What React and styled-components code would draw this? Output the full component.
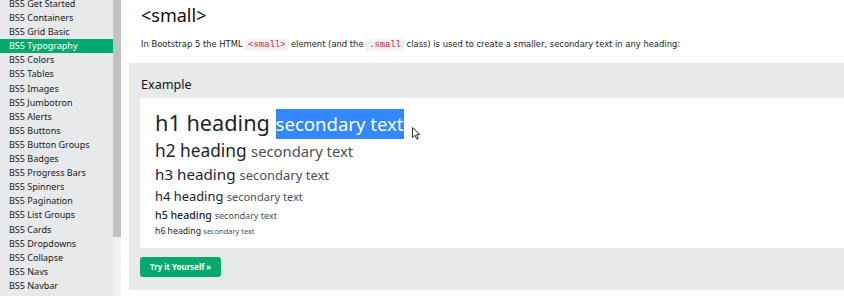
import styled, { createGlobalStyle } from 'styled-components'

const GlobalStyle = createGlobalStyle`
  html, body {
    margin: 0;
    padding: 0;
    background: #ffffff;
    overflow: hidden;
  }
`

const navItems = [
  'BS5 Get Started',
  'BS5 Containers',
  'BS5 Grid Basic',
  'BS5 Typography',
  'BS5 Colors',
  'BS5 Tables',
  'BS5 Images',
  'BS5 Jumbotron',
  'BS5 Alerts',
  'BS5 Buttons',
  'BS5 Button Groups',
  'BS5 Badges',
  'BS5 Progress Bars',
  'BS5 Spinners',
  'BS5 Pagination',
  'BS5 List Groups',
  'BS5 Cards',
  'BS5 Dropdowns',
  'BS5 Collapse',
  'BS5 Navs',
  'BS5 Navbar',
]

// font size and row height of each heading line
const headings = [
  { level: 1, size: 21.7, row: 31 },
  { level: 2, size: 17.3, row: 25 },
  { level: 3, size: 15.2, row: 23 },
  { level: 4, size: 12.9, row: 21 },
  { level: 5, size: 10.6, row: 17 },
  { level: 6, size: 8.7, row: 15 },
]

const Page = styled.div`
  display: flex;
  width: 844px;
  height: 296px;
  overflow: hidden;
  background: #ffffff;
`

const Sidebar = styled.nav`
  display: flex;
  width: 121px;
  flex-shrink: 0;
  background: #e7e9eb;
`

const NavList = styled.div`
  display: flex;
  flex: 1;
  flex-direction: column;
  margin-top: -3px;
`

const NavItem = styled.div`
  height: 14.1px;
  line-height: 14.1px;
  padding-left: 9px;
  font-family: 'Noto Sans', 'Open Sans', sans-serif;
  font-size: 9px;
  white-space: nowrap;
  color: ${(p) => (p.$active ? '#ffffff' : '#1a1a1a')};
  background: ${(p) => (p.$active ? '#04aa6d' : 'transparent')};
`

const Scrollbar = styled.div`
  display: flex;
  flex-direction: column;
  width: 8px;
  background: #f1f0f3;
`

const Thumb = styled.div`
  height: 237px;
  background: #c1c1c3;
`

const Main = styled.main`
  flex: 1;
  padding: 0 0 0 8px;
  display: flex;
  flex-direction: column;
`

const PageTitle = styled.h1`
  margin: 2px 0 0 12px;
  font-family: 'Noto Sans', 'Open Sans', sans-serif;
  font-size: 18px;
  font-weight: 400;
  line-height: 26px;
  color: #111111;
`

const Intro = styled.p`
  margin: 9px 0 0 12px;
  font-family: 'DejaVu Sans', Verdana, sans-serif;
  font-size: 8.4px;
  line-height: 14px;
  color: #222222;
  white-space: nowrap;
`

const Code = styled.code`
  font-family: 'Liberation Mono', monospace;
  font-size: 8.8px;
  color: #dc143c;
  background: #f1f1f1;
  padding: 1px 3px;
`

const ExampleBox = styled.section`
  margin-top: 11px;
  background: #e7e9eb;
  padding: 0 0 13px 11px;
  display: flex;
  flex-direction: column;
  align-items: flex-start;
  width: 760px;
`

const ExampleLabel = styled.h2`
  margin: 9px 0 0 1px;
  font-family: 'Noto Sans', 'Open Sans', sans-serif;
  font-size: 12.6px;
  font-weight: 400;
  line-height: 26px;
  color: #111111;
`

const ExampleCard = styled.div`
  width: 686px;
  background: #ffffff;
  padding: 8.5px 15px 9.5px;
  display: flex;
  flex-direction: column;
`

const Heading = styled.div`
  font-family: 'Noto Sans', 'Open Sans', sans-serif;
  font-size: ${(p) => p.$size}px;
  height: ${(p) => p.$row}px;
  line-height: ${(p) => p.$row}px;
  font-weight: ${(p) => (p.$level === 5 ? 500 : 400)};
  color: #212529;
  white-space: nowrap;
`

const Small = styled.small`
  font-size: 0.855em;
  font-weight: 400;
  color: ${(p) => (p.$selected ? '#ffffff' : '#495057')};
  background: ${(p) => (p.$selected ? '#3388ff' : 'transparent')};
  padding: ${(p) => (p.$selected ? '2px 0 3px' : '0')};
`

const TryButton = styled.button`
  margin-top: 9px;
  height: 20px;
  padding: 0 10px;
  border: none;
  border-radius: 3px;
  background: #04aa6d;
  color: #ffffff;
  font-family: 'Noto Sans', 'Open Sans', sans-serif;
  font-size: 7.9px;
  font-weight: 700;
  cursor: pointer;
`

const Cursor = styled.svg`
  position: absolute;
  left: 412px;
  top: 127px;
`

function App() {
  return (
    <>
      <GlobalStyle />
      <Page>
        <Sidebar>
          <NavList>
            {navItems.map((item) => (
              <NavItem key={item} $active={item === 'BS5 Typography'}>
                {item}
              </NavItem>
            ))}
          </NavList>
          <Scrollbar>
            <Thumb />
          </Scrollbar>
        </Sidebar>

        <Main>
          <PageTitle>&lt;small&gt;</PageTitle>
          <Intro>
            In Bootstrap 5 the HTML <Code>&lt;small&gt;</Code> element (and the{' '}
            <Code>.small</Code> class) is used to create a smaller, secondary text in any heading:
          </Intro>

          <ExampleBox>
            <ExampleLabel>Example</ExampleLabel>
            <ExampleCard>
              {headings.map((h) => (
                <Heading key={h.level} $level={h.level} $size={h.size} $row={h.row}>
                  h{h.level} heading <Small $selected={h.level === 1}>secondary text</Small>
                </Heading>
              ))}
            </ExampleCard>
            <TryButton>Try it Yourself »</TryButton>
          </ExampleBox>
        </Main>
      </Page>

      <Cursor width="9" height="13" viewBox="0 0 9 13">
        <path d="M0.5 0.5 L0.5 10.5 L3 8.2 L4.8 12.2 L6.3 11.5 L4.6 7.7 L8 7.7 Z" fill="#ffffff" stroke="#333333" strokeWidth="1" strokeLinejoin="round" />
      </Cursor>
    </>
  )
}

export default App
